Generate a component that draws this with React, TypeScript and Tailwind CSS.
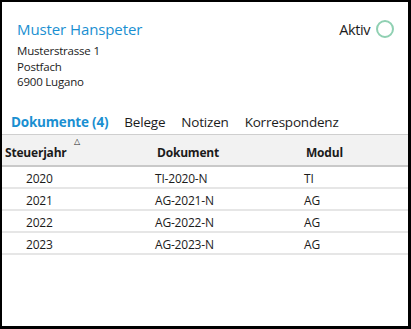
import React from "react";

const rows = [
  { year: "2020", doc: "TI-2020-N", modul: "TI" },
  { year: "2021", doc: "AG-2021-N", modul: "AG" },
  { year: "2022", doc: "AG-2022-N", modul: "AG" },
  { year: "2023", doc: "AG-2023-N", modul: "AG" },
];

const tabs = ["Belege", "Notizen", "Korrespondenz"];

const font = { fontFamily: '"Open Sans", "Noto Sans", Arial, sans-serif' };

export default function App() {
  return (
    <div
      className="w-[411px] h-[329px] bg-white border-black border-t-2 border-l-2 border-r-[3px] border-b-[3px] text-[#1b1b1b]"
      style={font}
    >
      {/* header */}
      <div className="flex justify-between pl-[15px] pr-[14px] pt-[16px]">
        <div>
          <h1 className="text-[15px] leading-[22px] text-[#1a8fd1] tracking-[-0.1px]">Muster Hanspeter</h1>
          <div className="mt-[3px] text-[11.5px] leading-[15.5px] tracking-[-0.2px]">
            <div>Musterstrasse 1</div>
            <div>Postfach</div>
            <div>6900 Lugano</div>
          </div>
        </div>
        <div className="flex items-center gap-[6px] h-[20px] mt-[1px]">
          <span className="text-[14.5px] tracking-[-0.4px] pt-[2px]">Aktiv</span>
          <span className="size-[18px] rounded-full border-2 border-[#8fd0b2]" />
        </div>
      </div>

      {/* tabs */}
      <div className="flex items-center gap-[16px] pl-[9px] mt-[23px] h-[20px] text-[13.5px] tracking-[-0.2px]">
        <span className="font-bold text-[#1a8fd1]">Dokumente (4)</span>
        {tabs.map((t) => (
          <span key={t}>{t}</span>
        ))}
      </div>

      {/* table */}
      <div className="mt-[1px] text-[12px] tracking-[-0.2px]">
        <div className="relative flex h-[33px] items-end pb-[3px] bg-[#f2f2f2] border-t border-[#cfcfcf] border-b-2 border-b-[#c9c9c9] font-bold">
          <span className="absolute left-[72px] top-[2px] text-[8px] leading-none font-normal">△</span>
          <div className="w-[152px] pl-[3px]">Steuerjahr</div>
          <div className="w-[148px] pl-[3px]">Dokument</div>
          <div className="flex-1 pl-[4px]">Modul</div>
        </div>
        {rows.map((r) => (
          <div key={r.year} className="flex h-[22px] items-center pt-[4px] border-b-2 border-[#e6e6e6]">
            <div className="w-[152px] pl-[24px]">{r.year}</div>
            <div className="w-[148px] pl-[1px]">{r.doc}</div>
            <div className="flex-1 pl-[2px]">{r.modul}</div>
          </div>
        ))}
      </div>
    </div>
  );
}
